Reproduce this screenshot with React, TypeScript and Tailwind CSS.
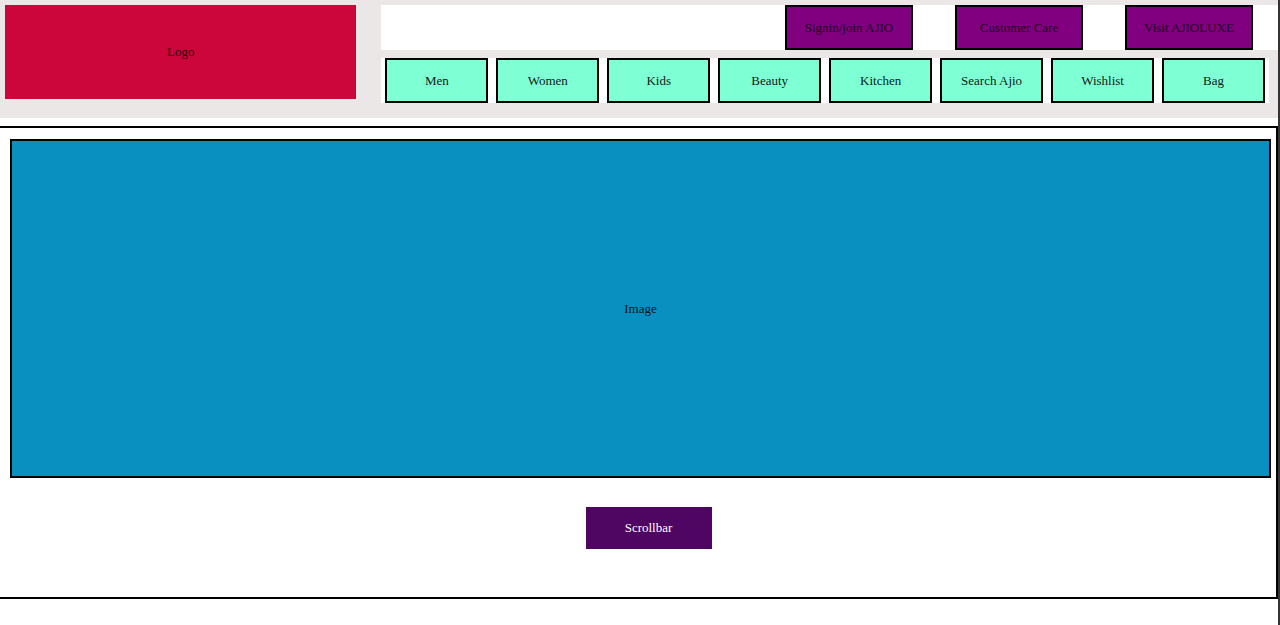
const accountLinks = ["Signin/join AJIO", "Customer Care", "Visit AJIOLUXE"];

const categories = ["Men", "Women", "Kids", "Beauty", "Kitchen", "Search Ajio", "Wishlist", "Bag"];

function Header() {
  return (
    <header className="flex items-start gap-[25px] bg-[#ece7e7] pt-[5px] pb-[15px] pl-[5px]">
      <a
        href="#home"
        className="flex h-[94px] w-[27.6%] shrink-0 items-center justify-center bg-[#cc053b] text-[#25000a]"
      >
        Logo
      </a>
      <div className="flex min-w-0 flex-1 flex-col gap-2">
        <nav aria-label="Account" className="flex justify-end gap-[42px] bg-white pr-[25px]">
          {accountLinks.map((label) => (
            <a
              key={label}
              href="#account"
              className="flex h-[45px] w-32 items-center justify-center border-2 border-black bg-[#800080] text-[#1c001c]"
            >
              {label}
            </a>
          ))}
        </nav>
        <nav aria-label="Categories" className="mr-[9px] grid grid-cols-8 gap-2 bg-white px-1">
          {categories.map((label) => (
            <a
              key={label}
              href="#category"
              className="flex h-[45px] items-center justify-center border-2 border-black bg-[#7fffd4] text-[#0c1d18]"
            >
              {label}
            </a>
          ))}
        </nav>
      </div>
    </header>
  );
}

export default function App() {
  return (
    <div className="min-h-screen border-r-2 border-[#333333] bg-white font-['Liberation_Serif','Times_New_Roman',serif] text-[13px] leading-4">
      <Header />
      <main className="mt-2 border-y-2 border-r-2 border-black pt-[11px] pr-[5px] pb-12 pl-[10px]">
        <section className="flex h-[339px] items-center justify-center border-2 border-black bg-[#0990c1] text-[#02161d]">
          Image
        </section>
        <div className="mt-[29px] flex justify-center pl-4">
          <button type="button" className="h-[42px] w-[126px] bg-[#4f0562] text-white">
            Scrollbar
          </button>
        </div>
      </main>
    </div>
  );
}
